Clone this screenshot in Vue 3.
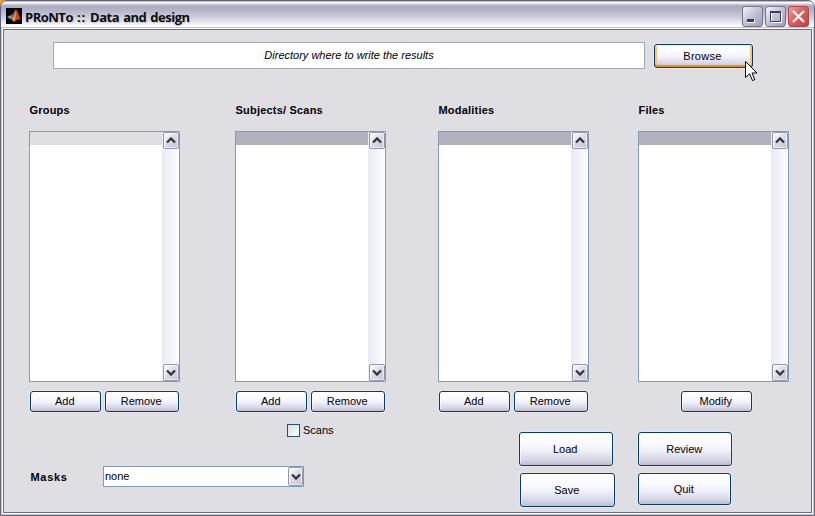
<script setup>
const columns = [
  { title: 'Groups', key: 'groups', buttons: ['Add', 'Remove'] },
  { title: 'Subjects/ Scans', key: 'subjects', buttons: ['Add', 'Remove'] },
  { title: 'Modalities', key: 'modalities', buttons: ['Add', 'Remove'] },
  { title: 'Files', key: 'files', buttons: ['Modify'] },
]
</script>

<template>
  <div class="desktop">
    <div class="window">
      <header class="titlebar">
        <svg class="logo" width="16" height="16" viewBox="0 0 16 16">
          <rect width="16" height="16" fill="#050508" />
          <path d="M1 9 L5 7 L7 9 L4 11Z" fill="#4fa9c9" />
          <path d="M5 7 L7 5.5 L10 1 L8 8 L6.5 9.5Z" fill="#3b6f92" />
          <path d="M10 1 C12 4 13 9 15 12 C12 10 10 12 8 14 C7 12 6 11 4 11 C7 10 8 6 10 1Z" fill="#d9480f" />
          <path d="M10 2 C10 6 10 10 8 14 C7 12 6 11 5 11 C8 10 9 6 10 2Z" fill="#f59a35" />
        </svg>
        <h1 class="title">PRoNTo <span class="colons">::</span> Data and design</h1>
        <div class="controls">
          <button class="ctl"><svg width="21" height="21"><path d="M5 14h8v3H5z" fill="#fff" /><path d="M5 13h7v3H5z" fill="#3d3d5c" /></svg></button>
          <button class="ctl"><svg width="21" height="21"><path d="M6.5 6.5h10v10h-10z" fill="none" stroke="#fff" /><path d="M5.5 5.5h10v10h-10z" fill="none" stroke="#3d3d5c" /><path d="M5 5h11v2H5z" fill="#3d3d5c" /></svg></button>
          <button class="ctl close"><svg width="21" height="21"><path d="M5 5l11 11M16 5L5 16" stroke="#fff" stroke-width="2.4" /></svg></button>
        </div>
      </header>

      <main class="content">
        <div class="dir-row">
          <div class="dir-field"><span>Directory where to write the results</span></div>
          <button class="btn browse">Browse
            <svg class="cursor" width="13" height="21" viewBox="0 0 13 21"><path d="M.5 .5V16.5L4.5 12.8L7.5 19.5L9.8 18.6L7 12H12Z" fill="#fff" stroke="#000" /></svg>
          </button>
        </div>

        <div class="columns">
          <section v-for="c in columns" :key="c.key" class="column" :class="c.key">
            <h2 class="label">{{ c.title }}</h2>
            <div class="list">
              <div class="items"><div class="selected"></div></div>
              <div class="scroll">
                <span class="arrow"><svg width="10" height="7"><path d="M1 5.5L5 1.5L9 5.5" /></svg></span>
                <span class="arrow"><svg width="10" height="7"><path d="M1 1.5L5 5.5L9 1.5" /></svg></span>
              </div>
            </div>
            <div class="actions">
              <button v-for="b in c.buttons" :key="b" class="btn" :class="b.toLowerCase()">{{ b }}</button>
            </div>
          </section>
        </div>

        <div class="bottom">
          <div class="options">
            <label class="check"><span class="box"></span><span>Scans</span></label>
            <div class="masks">
              <h2 class="label">Masks</h2>
              <div class="combo">
                <span>none</span>
                <span class="drop"><svg width="10" height="7"><path d="M1 1.5L5 5.5L9 1.5" /></svg></span>
              </div>
            </div>
          </div>
          <div class="final">
            <button class="btn load">Load</button>
            <button class="btn review">Review</button>
            <button class="btn save">Save</button>
            <button class="btn quit">Quit</button>
          </div>
        </div>
      </main>
    </div>
  </div>
</template>

<style>
body { margin: 0; overflow: hidden; }
</style>

<style scoped>
* { box-sizing: border-box; }
.desktop {
  width: 815px; height: 516px;
  background: linear-gradient(90deg, #f0a030 0 10px, #fff 10px);
  font: 11px/13px "Liberation Sans", Arial, sans-serif; color: #000;
}
.window {
  width: 815px; height: 516px; overflow: hidden;
  border: 1px solid #62627e; border-radius: 7px 7px 0 0;
  background: #dfdee3;
  display: flex; flex-direction: column;
}
.titlebar {
  height: 28px; flex: none; padding: 2px 5px 0 5px;
  display: flex; align-items: center;
  background: linear-gradient(#77778f 0, #fff 1px, #fff 2px, #d0d0de 3px, #a9a9c0 5px, #b4b4c8 9px, #c9c9d7 15px, #e6e6ed 21px, #fff 25px, #fafafd 27px, #b5b5c5 28px);
}
.logo { flex: none; }
.title {
  margin: 1px 0 0 3px; font: bold 13px/18px "Open Sans", sans-serif;
  letter-spacing: -0.5px; word-spacing: 1.2px; color: #0b0b10; white-space: nowrap;
  text-shadow: 1px 1px 1px #c4c4d0;
}
.colons { letter-spacing: .8px; }
.controls { margin-left: auto; display: flex; gap: 2px; }
.ctl {
  width: 21px; height: 21px; padding: 0; overflow: hidden;
  border: 1px solid #74748f; border-radius: 3px;
  background: linear-gradient(135deg, #f5f5fa, #c5c5d8 45%, #9c9cb8);
}
.ctl svg { display: block; margin: -1px; }
.ctl.close { border-color: #a94850; background: linear-gradient(135deg, #f2a09a, #dc625f 45%, #c33d42); }
.content {
  flex: 1; margin: 0 2px 2px; border: 1px solid #6b6b87;
  box-shadow: 0 0 0 1px #fff, 0 0 0 2px #c6c6d5;
  display: flex; flex-direction: column;
}
.dir-row { display: flex; align-items: flex-start; padding: 12px 0 0 49px; height: 74px; }
.dir-field {
  width: 592px; height: 27px; border: 1px solid #a2a7b0; background: #fff;
  text-align: center; line-height: 25px; font-style: italic;
}
.btn {
  font: inherit; color: #000; padding: 0 1.5px 1px 0; text-align: center; white-space: nowrap;
  height: 21px; border: 1px solid #063b6c; border-radius: 3px;
  background: linear-gradient(#fff 0, #fbfbff 30%, #f0f0fa 55%, #d6d6e6 83%, #c0bfd2 100%);
  box-shadow: 0 0 0 1px #e8e7e9, inset 1px 0 #ffffff90, inset -1px 0 #ffffff60;
}
.browse {
  position: relative; width: 99px; height: 24px; margin: 2px 0 0 9px; padding: 1px 2px 0 0;
  letter-spacing: .3px;
  box-shadow: 0 0 0 1px #e8e7e9, inset 0 1px #fff0cf, inset 0 -2px #e59700, inset 2px 0 #fac761, inset -2px 0 #fac761;
}
.cursor { position: absolute; left: 90px; top: 16px; }
.columns { display: grid; grid-template-columns: 206px 203px 200px 151px; padding-left: 25px; }
.label { margin: 0; font: bold 11px/13px "Liberation Sans", Arial, sans-serif; letter-spacing: .2px; white-space: nowrap; }
.column .label { height: 27px; padding-left: .5px; }
.list { width: 151px; height: 251px; border: 1px solid #7f9db9; background: #fff; display: flex; }
.items { flex: 1; }
.selected { height: 13px; background: #b1b2be; }
.groups .selected { background: #dfdee3; }
.scroll {
  width: 17px; display: flex; flex-direction: column; justify-content: space-between;
  background: linear-gradient(90deg, #eaeaf2, #f4f4fa 60%, #fefeff);
}
.arrow, .drop {
  height: 17px; width: 16px; margin-left: 1px; border: 1px solid #9595a9; border-radius: 2px;
  background: linear-gradient(135deg, #fff, #dadae6 50%, #c3c3d4);
  box-shadow: inset 0 0 0 1px #ffffffa0;
  display: flex; align-items: center; justify-content: center;
}
.arrow path, .drop path { fill: none; stroke: #33333b; stroke-width: 2.3; }
.actions { display: flex; gap: 4px; padding: 9px 0 0 1px; }
.add { width: 71px; }
.remove { width: 74px; }
.modify { width: 71px; margin-left: 42px; }
.bottom { display: flex; }
.options { width: 515px; padding: 12px 0 0 26px; }
.check { display: flex; align-items: center; gap: 3px; margin-left: 257px; height: 13px; }
.box { width: 13px; height: 13px; border: 1px solid #1d5281; background: linear-gradient(135deg, #dcdcd7, #fff); }
.masks { display: flex; margin-top: 29px; }
.masks .label { width: 73px; padding-top: 5px; padding-left: .5px; letter-spacing: .7px; }
.combo {
  width: 201px; height: 21px; border: 1px solid #7f9db9; background: #fff; padding-left: 1px;
  display: flex; align-items: center; justify-content: space-between;
}
.drop { height: 19px; width: 15px; }
.final { display: grid; grid-template-columns: 119px 95px; grid-template-rows: 41px 34px; padding-top: 20px; }
.final .btn { padding-top: 1px; padding-bottom: 0; }
.load, .review { width: 94px; height: 34px; }
.save { width: 95px; height: 34px; margin-left: 1px; }
.quit { width: 93px; height: 32px; }
</style>
